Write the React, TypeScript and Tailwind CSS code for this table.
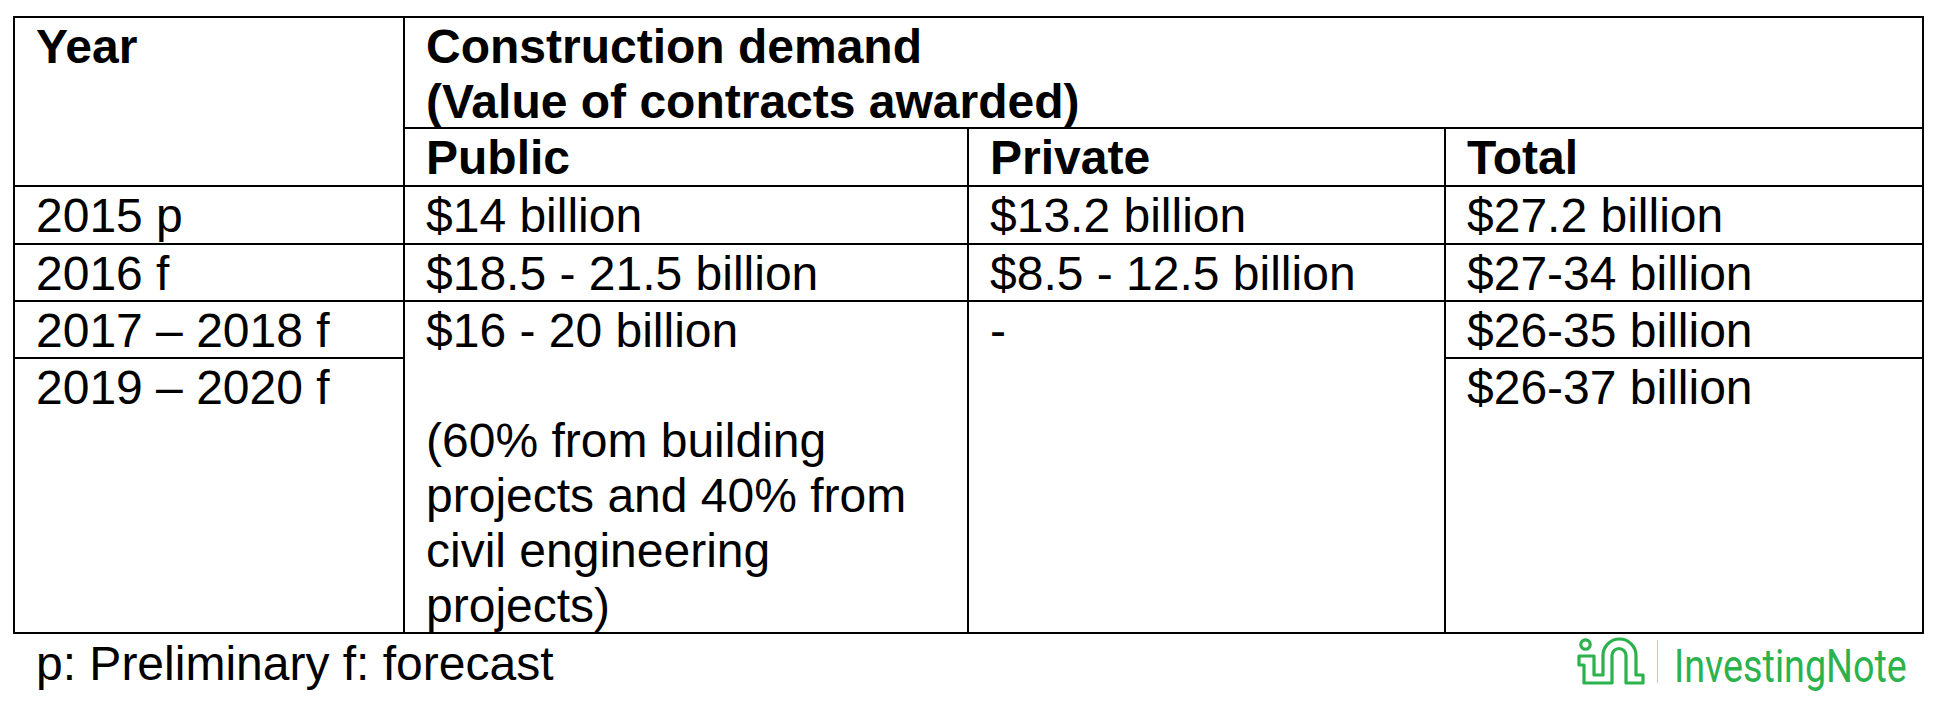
const cell = "bg-white pl-[21px] pr-[24px] pt-[1px]";

function Logo() {
  return (
    <div className="flex items-start pt-[2px] mr-[20px]">
      <svg width="70" height="50" viewBox="0 0 70 50" fill="none" stroke="#2bb24c" strokeWidth="3.2" strokeLinejoin="round">
        <circle cx="8.5" cy="8.5" r="4.7" />
        <path d="M2 20 H17 V39 H26 V19.5 A16.5 16.5 0 0 1 59 19.5 V39 H66 V47 H49 V19.5 A7 7 0 0 0 35 19.5 V47 H7 V29 H2 Z" />
      </svg>
      <div className="ml-[10px] mt-[4px] w-px h-[43px] bg-[#a9d9b3]" />
      <div className="ml-[16px] mt-[2px] w-[230px] h-[46px]">
        <span className="inline-block origin-left scale-x-[0.82] whitespace-nowrap font-['Roboto',sans-serif] text-[46px] leading-[46px] text-[#2bb24c]">
          InvestingNote
        </span>
      </div>
    </div>
  );
}

export default function App() {
  return (
    <div className="w-[1936px] h-[709px] bg-white pt-[16px] pl-[13px] text-black font-['Liberation_Sans',Arial,sans-serif] text-[48px] leading-[55px]">
      <div className="grid w-fit bg-black p-[2px] gap-[2px] grid-cols-[388px_562px_475px_476px] grid-rows-[109px_56px_56px_55px_55px_273px]">
        <div className={`${cell} row-span-2 font-bold`}>Year</div>
        <div className={`${cell} col-span-3 font-bold`}>
          Construction demand
          <br />
          (Value of contracts awarded)
        </div>
        <div className={`${cell} font-bold`}>Public</div>
        <div className={`${cell} font-bold`}>Private</div>
        <div className={`${cell} font-bold`}>Total</div>

        <div className={cell}>2015 p</div>
        <div className={cell}>$14 billion</div>
        <div className={cell}>$13.2 billion</div>
        <div className={cell}>$27.2 billion</div>

        <div className={cell}>2016 f</div>
        <div className={cell}>$18.5 - 21.5 billion</div>
        <div className={cell}>$8.5 - 12.5 billion</div>
        <div className={cell}>$27-34 billion</div>

        <div className={cell}>2017 – 2018 f</div>
        <div className={`${cell} row-span-2`}>
          <p>$16 - 20 billion</p>
          <p className="mt-[55px]">(60% from building projects and 40% from civil engineering projects)</p>
        </div>
        <div className={`${cell} row-span-2`}>-</div>
        <div className={cell}>$26-35 billion</div>

        <div className={cell}>2019 – 2020 f</div>
        <div className={cell}>$26-37 billion</div>
      </div>

      <div className="flex justify-between items-start w-[1911px]">
        <p className="pl-[23px] pt-[2px]">p: Preliminary f: forecast</p>
        <Logo />
      </div>
    </div>
  );
}
